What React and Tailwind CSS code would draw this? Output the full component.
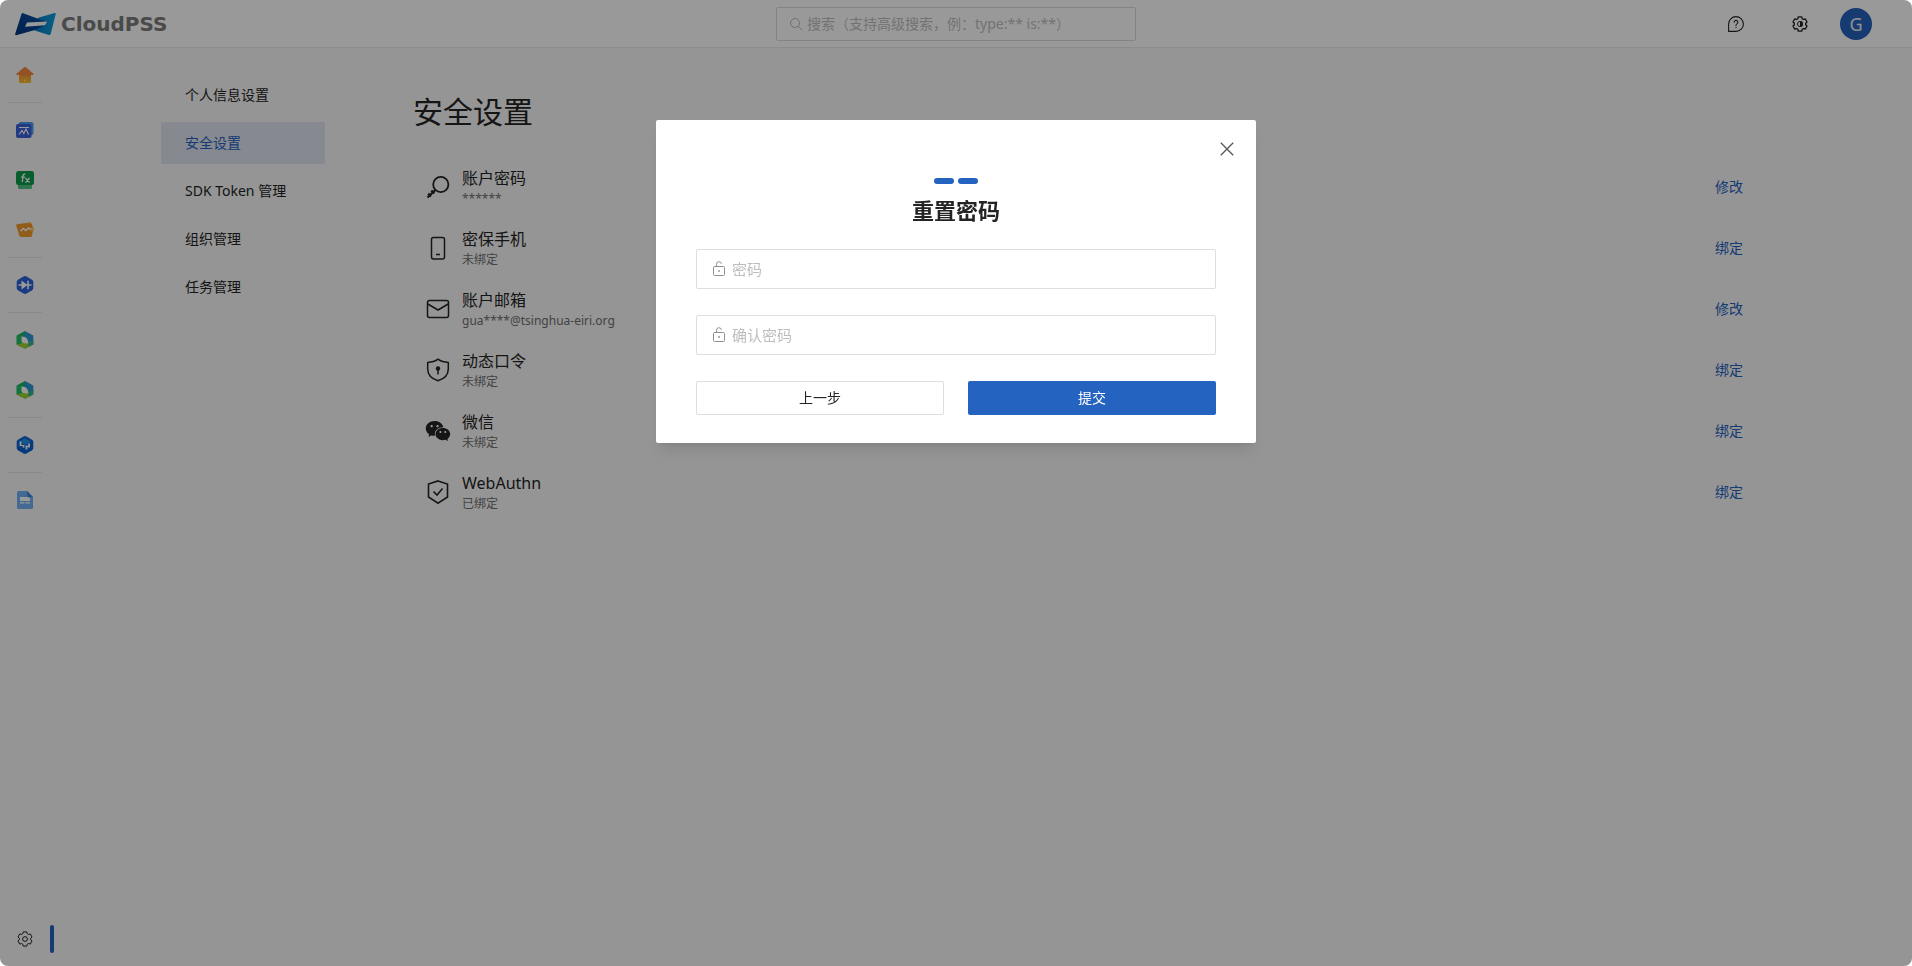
import React from "react";
import { AiFillWechat } from "react-icons/ai";

// outline of a cog with six teeth around (12, 12)
const cogPath = (() => {
  const points = [];
  for (let i = 0; i < 6; i++) {
    const base = i * 60 - 90;
    [
      [-22, 8.6],
      [-14, 11],
      [14, 11],
      [22, 8.6],
    ].forEach(([angle, radius]) => {
      const rad = ((base + angle) * Math.PI) / 180;
      const x = 12 + radius * Math.cos(rad);
      const y = 12 + radius * Math.sin(rad);
      points.push(`${x.toFixed(2)} ${y.toFixed(2)}`);
    });
  }
  return `M${points.join("L")}Z`;
})();

function CogIcon() {
  return (
    <svg className="size-4" viewBox="0 0 24 24" fill="none" stroke="currentColor" strokeWidth="1.5" strokeLinejoin="round">
      <path d={cogPath} />
      <circle cx="12" cy="12" r="3.6" />
    </svg>
  );
}

function ThemeIcon() {
  return (
    <svg className="size-4" viewBox="0 0 24 24" fill="none" stroke="currentColor" strokeWidth="2" strokeLinejoin="round">
      <path d={cogPath} />
      <circle cx="12" cy="12" r="3.8" strokeWidth="1.4" />
      <path d="M12 7.5a4.5 4.5 0 0 1 0 9z" fill="currentColor" stroke="none" />
    </svg>
  );
}

function HelpIcon() {
  return (
    <svg className="size-4" viewBox="0 0 16 16" fill="none" stroke="currentColor" strokeWidth="1.1" strokeLinejoin="round" strokeLinecap="round">
      <path d="M.6 15.4V8A7.4 7.4 0 1 1 8 15.4z" />
      <path d="M6.2 6.2a1.8 1.8 0 1 1 2.9 1.4C8.3 8.1 8 8.500 8 9.400M8 11.300v.3" />
    </svg>
  );
}

function SearchIcon() {
  return (
    <svg className="size-3.5" viewBox="0 0 14 14" fill="none" stroke="currentColor" strokeWidth="1">
      <circle cx="6" cy="6" r="4.5" />
      <path d="M9.3 9.3 13.2 13.2" />
    </svg>
  );
}

function LockIcon() {
  return (
    <svg className="size-4" viewBox="0 0 16 16" fill="none" stroke="currentColor" strokeWidth="1" strokeLinejoin="round" strokeLinecap="round">
      <rect x="2.500" y="5.500" width="11" height="9" rx="1" />
      <path d="M5.500 5.500V3.300a2.500 2.500 0 0 1 4.900-.8" />
      <circle cx="8" cy="10" r=".9" fill="currentColor" stroke="none" />
    </svg>
  );
}

function Logo() {
  return (
    <svg className="h-6 w-[43px]" viewBox="0 0 43 24">
      <defs>
        <linearGradient id="logo-left" x1="0" y1="1" x2="1" y2="0">
          <stop offset="0" stopColor="#04367f" />
          <stop offset="1" stopColor="#0a56a8" />
        </linearGradient>
        <linearGradient id="logo-right" x1="0" y1="0" x2="1" y2="0">
          <stop offset="0" stopColor="#0b78c4" />
          <stop offset="1" stopColor="#0ca0dc" />
        </linearGradient>
      </defs>
      <path d="M9.2 1.2 22.700 6.300 36 10 31 16 20 18.200 2.200 23.200Q.7 23.400 1.200 21.800L7.500 1.900Q8 .8 9.200 1.200z" fill="url(#logo-left)" />
      <path d="M40.600 1Q42.200.8 41.700 2.200L36.700 22Q36.300 23.400 34.800 23L20 18.200 31 13.300 33 9.800 22.700 6.300z" fill="url(#logo-right)" />
      <path d="M13 10.600 33.200 9.600 31 13.300 11 14.700z" fill="#fff" />
    </svg>
  );
}

function HomeGlyph() {
  return (
    <svg className="size-[18px]" viewBox="0 0 18 18">
      <defs>
        <linearGradient id="home-body" x1="0" y1="0" x2="0" y2="1">
          <stop offset="0" stopColor="#f58b3b" />
          <stop offset="1" stopColor="#fcc02b" />
        </linearGradient>
      </defs>
      <path d="M3 7h12v8.500Q15 17 14 17H4Q3 17 3 15.500z" fill="url(#home-body)" />
      <path d="M8 13.500h2v2H8z" fill="#fdd45a" />
      <path d="M8.200 1.300q.8-.6 1.600 0l7.700 6.500q.6.900-.5 1.200H1Q-.1 8.700.5 7.800z" fill="#f6873e" />
    </svg>
  );
}

function ModelGlyph() {
  return (
    <svg className="size-[18px]" viewBox="0 0 18 18">
      <rect x="2.500" y="1" width="15" height="13" rx="2" fill="#4b9df0" />
      <rect x="0" y="3" width="15.500" height="14" rx="2" fill="#3a62dc" />
      <path d="M3 6.500h10M3 13.500l3-4 1.800 3 2.200-4.500 2.500 5.500" fill="none" stroke="#fff" strokeWidth="1.100" />
    </svg>
  );
}

function FunctionGlyph() {
  return (
    <svg className="size-[18px]" viewBox="0 0 18 18">
      <rect x="2" y="9" width="14" height="9" rx="1.500" fill="#4fc486" />
      <rect x="0" y="0" width="18" height="14" rx="2.500" fill="#0d9d4b" />
      <path d="M9.500 3.200Q7.300 2.600 7 5L6.300 11M5 6.200h4M9.500 7l4 4.500M13.500 7l-4 4.500" fill="none" stroke="#fff" strokeWidth="1.300" />
    </svg>
  );
}

function TrendGlyph() {
  return (
    <svg className="size-[18px]" viewBox="0 0 18 18">
      <path d="M1.300 3.500 13.500 1.200Q15 1 15.300 2.300L17.800 8 16.500 12.500 4 15z" fill="#fbb03b" />
      <path d="M.8 3.300 5.500 2.800H14.500q1.500 0 1.600 1.300v10.400q0 1.400-1.400 1.500H5.300Q3.800 16 3.300 14.500L.3 5Q0 3.600.8 3.300z" fill="#f49a2c" />
      <path d="M15.500 6.200 17.800 8 15.500 11z" fill="#fcd93a" />
      <path d="M4.500 10.200l2.800-2.700 2.500 2L12.300 7l3 1.500" fill="none" stroke="#fff" strokeWidth="1.400" />
    </svg>
  );
}

function DiodeGlyph() {
  return (
    <svg className="size-[18px]" viewBox="0 0 18 18">
      <path d="M7.500.5q1.500-.8 3 0l5.500 3.200q1.300.8 1.300 2.300v6q0 1.500-1.300 2.300l-5.500 3.200q-1.500.8-3 0L2 14.300Q.7 13.500.7 12V6Q.7 4.500 2 3.700z" fill="#2c63dd" />
      <path d="M2.500 8.300h13v1.400h-13zM5.500 4.500 11.500 9l-6 4.500zM11.200 4.800h1.600v8.400h-1.600z" fill="#fff" />
    </svg>
  );
}

function LeafGlyph() {
  return (
    <svg className="size-[18px]" viewBox="0 0 18 18">
      <path d="M9 0 .7 4.500v9L5 16 9 9z" fill="#17b26a" />
      <path d="M9 0l8.300 4.500v9L9 9z" fill="#2f98d4" />
      <path d="M9 9l8.300 4.500L9 18 .7 13.500z" fill="#9bd032" />
      <path d="M.7 5v8.500L6 12V4z" fill="#22bf69" />
      <path d="M17.300 9v4.500L13 15.800 11 11z" fill="#35b58a" />
      <path d="M5.500 5.500Q12 5 12.500 12.500 5.500 13 5.500 9.500z" fill="#fff" />
    </svg>
  );
}

function GridGlyph() {
  return (
    <svg className="size-[18px]" viewBox="0 0 18 18">
      <path d="M7.500.5q1.500-.8 3 0l5.500 3.200q1.300.8 1.300 2.300v6q0 1.500-1.300 2.300l-5.500 3.200q-1.500.8-3 0L2 14.300Q.7 13.500.7 12V6Q.7 4.500 2 3.700z" fill="#0b62d0" />
      <path d="M9 2.200 15.200 5.700 9 9 2.800 5.700z" fill="#1f8fe6" />
      <path d="M4.500 5.500v4.500M7.500 9v2.500M10.500 9.500v4M13 7.500v4" fill="none" stroke="#fff" strokeWidth="1.800" />
      <path d="M4.500 9.500h3.500M10.500 10.500H13" fill="none" stroke="#fff" strokeWidth="1" />
    </svg>
  );
}

function DocGlyph() {
  return (
    <svg className="size-[18px]" viewBox="0 0 18 18">
      <path d="M2.500 0H11l6 6v10.500q0 1.500-1.500 1.500h-13Q1 18 1 16.500v-15Q1 0 2.500 0z" fill="#73b0f5" />
      <path d="M11 0l6 6h-4.500Q11 6 11 4.500z" fill="#3f88e0" />
      <path d="M4 6h8l2 1.500V10H4zM4 11.200h4.500v1.300H4zM9.500 11.200H14v1.300H9.500z" fill="#fff" />
    </svg>
  );
}

function KeyIcon() {
  return (
    <svg className="size-6" viewBox="0 0 24 24" fill="none" stroke="currentColor" strokeWidth="1.8">
      <circle cx="14.800" cy="9.500" r="7.600" />
      <path d="M9.300 15 1.500 22.500M5.300 15.500l3 3M2.200 18.600l2.800 2.800" strokeWidth="2.2" />
    </svg>
  );
}

function PhoneIcon() {
  return (
    <svg className="size-6" viewBox="0 0 24 24" fill="none" stroke="currentColor" strokeWidth="1.5">
      <rect x="5.500" y="1.500" width="13" height="21.500" rx="2" />
      <path d="M10 18.500h4" />
    </svg>
  );
}

function MailIcon() {
  return (
    <svg className="size-6" viewBox="0 0 24 24" fill="none" stroke="currentColor" strokeWidth="1.5" strokeLinejoin="round">
      <rect x="1.500" y="3.500" width="21" height="17" rx="2" />
      <path d="M1.800 7 12 13l10.200-6" />
    </svg>
  );
}

function ShieldKeyIcon() {
  return (
    <svg className="size-6" viewBox="0 0 24 24" fill="none" stroke="currentColor" strokeWidth="1.5" strokeLinejoin="round">
      <path d="M12 1.200Q16 4.200 22.300 4.400V11q0 8.500-10.300 11.800Q1.700 19.500 1.700 11V4.400Q8 4.200 12 1.200z" />
      <circle cx="12" cy="10.500" r="2.200" fill="currentColor" stroke="none" />
      <path d="M12 11v5.500" />
    </svg>
  );
}

function ShieldCheckIcon() {
  return (
    <svg className="size-6" viewBox="0 0 24 24" fill="none" stroke="currentColor" strokeWidth="1.6">
      <path d="M12 .9 21.500 4v13L12 23.200 2.500 17V4z" />
      <path d="M7.500 11.500l3.500 3.500 5.500-6.500" />
    </svg>
  );
}

function WechatIcon() {
  return <AiFillWechat className="-mx-0.5 size-7" />;
}

const apps = [
  [{ name: "首页", Icon: HomeGlyph }],
  [
    { name: "模型", Icon: ModelGlyph },
    { name: "函数", Icon: FunctionGlyph },
    { name: "应用", Icon: TrendGlyph },
  ],
  [{ name: "电磁暂态", Icon: DiodeGlyph }],
  [
    { name: "综合能源", Icon: LeafGlyph },
    { name: "能源规划", Icon: LeafGlyph },
  ],
  [{ name: "配电网", Icon: GridGlyph }],
  [{ name: "文档", Icon: DocGlyph }],
];

const menu = ["个人信息设置", "安全设置", "SDK Token 管理", "组织管理", "任务管理"];

const settings = [
  { title: "账户密码", detail: "******", action: "修改", Icon: KeyIcon },
  { title: "密保手机", detail: "未绑定", action: "绑定", Icon: PhoneIcon },
  { title: "账户邮箱", detail: "gua****@tsinghua-eiri.org", action: "修改", Icon: MailIcon },
  { title: "动态口令", detail: "未绑定", action: "绑定", Icon: ShieldKeyIcon },
  { title: "微信", detail: "未绑定", action: "绑定", Icon: WechatIcon },
  { title: "WebAuthn", detail: "已绑定", action: "绑定", Icon: ShieldCheckIcon },
];

function Header() {
  return (
    <header className="grid h-12 grid-cols-[1fr_360px_1fr] items-center border-b border-[#e9e9e9] bg-white">
      <a href="#" className="flex items-center gap-1 justify-self-start pl-3.5">
        <Logo />
        <span className="font-['DejaVu_Sans',sans-serif] text-[20px] leading-6 font-bold text-[#7c7c7c]">CloudPSS</span>
      </a>
      <div className="flex h-[34px] items-center gap-1 rounded-xs border border-[#dadada] px-3 text-[#bbbbbb]">
        <label htmlFor="search" aria-label="搜索">
          <SearchIcon />
        </label>
        <input
          id="search"
          type="text"
          className="min-w-0 flex-1 bg-transparent text-sm outline-none placeholder:text-[#bfbfbf]"
          placeholder="搜索（支持高级搜索，例：type:** is:**）"
        />
      </div>
      <div className="flex items-center justify-end pr-10">
        <button aria-label="帮助" className="flex h-12 w-16 items-center justify-center">
          <HelpIcon />
        </button>
        <button aria-label="主题" className="flex h-12 w-16 items-center justify-center">
          <ThemeIcon />
        </button>
        <button className="ml-2 size-8 rounded-full bg-[#2563c0] text-lg leading-8 text-[#f0f0f0]">G</button>
      </div>
    </header>
  );
}

function Sidebar() {
  return (
    <aside className="flex w-[54px] flex-col justify-between py-0.5">
      <nav className="w-[50px]">
        {apps.map((group, i) => (
          <div key={i}>
            {i > 0 && <hr className="mx-2 my-0.5 border-[#e4e4e4]" />}
            {group.map(({ name, Icon }) => (
              <a key={name} href="#" aria-label={name} className="flex h-[50px] items-center justify-center">
                <Icon />
              </a>
            ))}
          </div>
        ))}
      </nav>
      <a href="#" aria-label="设置" className="flex h-[50px] items-center">
        <span className="flex w-[50px] justify-center">
          <CogIcon />
        </span>
        <span className="h-7 w-1 rounded-xs bg-[#2563c0]" />
      </a>
    </aside>
  );
}

function ResetPassword() {
  return (
    <div className="fixed inset-0 flex items-start justify-center rounded-lg bg-black/40 pt-[120px]">
      <div role="dialog" aria-labelledby="reset-title" className="relative w-[600px] rounded-xs bg-white px-10 pt-[58px] pb-7 shadow-lg">
        <button aria-label="关闭" className="absolute top-5 right-5 p-0.5 text-[#555]">
          <svg className="size-3.5" viewBox="0 0 14 14" fill="none" stroke="currentColor" strokeWidth="1.3">
            <path d="M.8.8 13.2 13.2M13.2.8.8 13.2" />
          </svg>
        </button>
        <div className="flex justify-center gap-1">
          <span className="h-1.5 w-5 rounded-full bg-[#2563c0]" />
          <span className="h-1.5 w-5 rounded-full bg-[#2563c0]" />
        </div>
        <h2 id="reset-title" className="mt-2.5 text-center text-[22px] leading-8 font-bold">
          重置密码
        </h2>
        <form className="mt-[23px] flex flex-col gap-[26px]">
          {["密码", "确认密码"].map((name) => (
            <div key={name} className="flex h-10 items-center gap-[5px] rounded-xs border border-[#dedede] px-3.5">
              <label htmlFor={name} aria-label={name} className="text-[#909090]">
                <LockIcon />
              </label>
              <input
                id={name}
                type="password"
                className="min-w-0 flex-1 text-[15px] leading-5 outline-none placeholder:text-[#bdbdbd]"
                placeholder={name}
              />
            </div>
          ))}
          <div className="grid grid-cols-2 gap-6">
            <button type="button" className="h-[34px] rounded-xs border border-[#dedede] text-sm">
              上一步
            </button>
            <button type="submit" className="h-[34px] rounded-xs bg-[#2563c0] text-sm text-white">
              提交
            </button>
          </div>
        </form>
      </div>
    </div>
  );
}

function App() {
  return (
    <div className="flex min-h-screen flex-col overflow-hidden rounded-lg bg-[#f8f8f8] font-['Noto_Sans','Noto_Sans_CJK_SC',sans-serif] text-[#242424]">
      <Header />
      <div className="flex flex-1">
        <Sidebar />
        <div className="flex flex-1 pr-[161px] pl-[107px]">
          <nav className="flex w-[164px] flex-col gap-1.5 pt-[26px] text-sm">
            {menu.map((item) => (
              <a
                key={item}
                href="#"
                className={
                  item === "安全设置"
                    ? "flex h-[42px] items-center rounded-xs bg-[#e0e5f1] px-6 text-[#2563c0]"
                    : "flex h-[42px] items-center px-6"
                }
              >
                {item}
              </a>
            ))}
          </nav>
          <main className="ml-[88px] flex-1 pt-11">
            <h1 className="text-[30px] leading-10">安全设置</h1>
            <ul className="mt-6 pr-2 pl-[13px]">
              {settings.map(({ title, detail, action, Icon }) => (
                <li key={title} className="flex h-[61px] items-center gap-3">
                  <Icon />
                  <div className="flex-1">
                    <p className="text-base leading-6">{title}</p>
                    <p className="text-xs leading-[18px] text-[#707070]">{detail}</p>
                  </div>
                  <button className="text-sm text-[#2563c0]">{action}</button>
                </li>
              ))}
            </ul>
          </main>
        </div>
      </div>
      <ResetPassword />
    </div>
  );
}

export default App;
